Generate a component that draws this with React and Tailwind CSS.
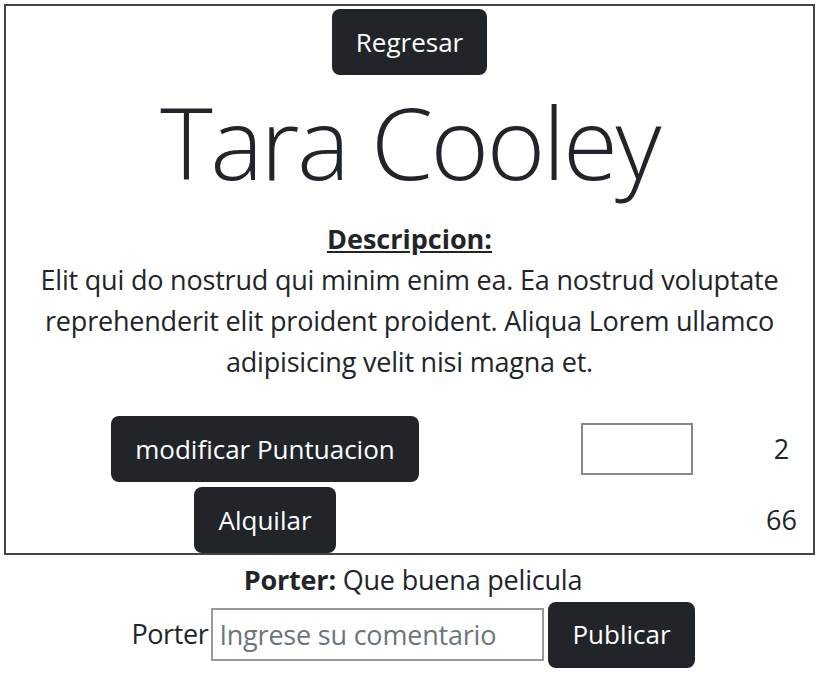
export default function App() {
  return (
    <div className="font-['Open_Sans',sans-serif] text-[#212529] text-[27px] leading-[1.5] pt-[4px]">
      {/* Movie card */}
      <div className="mx-[4px] w-[811px] border-2 border-[#444] text-center">
        <button className="mt-[3px] h-[66px] px-[24px] rounded-[8px] bg-[#212529] text-white text-[26px]">
          Regresar
        </button>
        <h1 className="mt-[6px] text-[100px] font-light leading-[1.2] tracking-[-2.5px]">Tara Cooley</h1>
        <div className="mt-[17px] leading-[41px]">
          <u className="font-bold">Descripcion:</u>
          <p className="px-[8px] tracking-[-0.2px]">
            Elit qui do nostrud qui minim enim ea. Ea nostrud voluptate reprehenderit elit proident proident. Aliqua Lorem ullamco adipisicing velit nisi magna et.
          </p>
        </div>
        <div className="mt-[34px] grid grid-cols-[518px_226px_1fr] items-center">
          <div className="flex justify-center">
            <button className="h-[66px] px-[24px] rounded-[8px] bg-[#212529] text-white text-[26px]">
              modificar Puntuacion
            </button>
          </div>
          <div className="flex justify-center">
            <input className="w-[112px] h-[52px] border-2 border-[#888] bg-white" />
          </div>
          <div>2</div>
          <div className="flex justify-center pt-[5px]">
            <button className="h-[66px] px-[24px] rounded-[8px] bg-[#212529] text-white text-[26px]">
              Alquilar
            </button>
          </div>
          <div></div>
          <div className="pt-[5px]">66</div>
        </div>
      </div>

      {/* Comments */}
      <div className="mt-[5px] text-center tracking-[-0.2px]">
        <span className="font-bold">Porter:</span> Que buena pelicula
      </div>
      <div className="mt-[1px] flex justify-center items-center">
        <span className="tracking-[-0.4px]">Porter</span>
        <input
          placeholder="Ingrese su comentario"
          className="ml-[3px] w-[333px] h-[53px] border-2 border-[#999] px-[6px] tracking-[-0.2px] placeholder:text-[#6c757d]"
        />
        <button className="ml-[4px] h-[66px] px-[24px] rounded-[8px] bg-[#212529] text-white text-[26px]">
          Publicar
        </button>
      </div>
    </div>
  );
}
